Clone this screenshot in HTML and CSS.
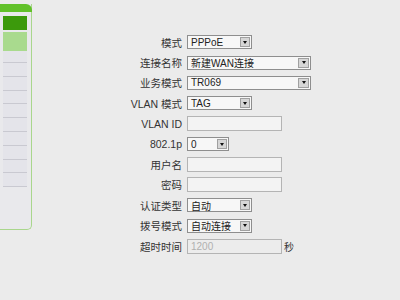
FILE: index.html
```html
<!DOCTYPE html>
<html lang="zh-CN">
<head>
  <meta charset="UTF-8">
  <title>WAN 设置</title>
  <link rel="stylesheet" href="styles.css">
</head>
<body>

<div class="page">
  <div class="sidebar">
    <div class="side-head"></div>
    <div class="side-body">
      <div class="nav-active"></div>
      <div class="nav-sub"></div>
      <ul class="nav-list">
        <li></li><li></li><li></li><li></li><li></li>
        <li></li><li></li><li></li><li></li><li></li>
      </ul>
    </div>
  </div>

  <div class="main">
    <div class="form">
      <label>模式</label>
      <div class="select w-short"><span>PPPoE</span><i class="arrow"></i></div>

      <label>连接名称</label>
      <div class="select w-long"><span>新建WAN连接</span><i class="arrow"></i></div>

      <label>业务模式</label>
      <div class="select w-long"><span>TR069</span><i class="arrow"></i></div>

      <label>VLAN 模式</label>
      <div class="select w-short"><span>TAG</span><i class="arrow"></i></div>

      <label>VLAN ID</label>
      <div><input class="text" type="text"></div>

      <label>802.1p</label>
      <div class="select w-tiny"><span>0</span><i class="arrow"></i></div>

      <label>用户名</label>
      <div><input class="text" type="text"></div>

      <label>密码</label>
      <div><input class="text" type="password"></div>

      <label>认证类型</label>
      <div class="select w-short"><span>自动</span><i class="arrow"></i></div>

      <label>拨号模式</label>
      <div class="select w-short"><span>自动连接</span><i class="arrow"></i></div>

      <label>超时时间</label>
      <div class="with-unit"><input class="text" type="text" value="1200" disabled><span>秒</span></div>
    </div>
  </div>
</div>

</body>
</html>
```

FILE: styles.css
```css
body {
    margin: 0;
    background-color: #ebebeb;
    font-family: 'Liberation Sans', 'Noto Sans CJK SC', sans-serif;
    color: #333;
}
.page {
    display: flex;
    align-items: flex-start;
    width: 400px;
    height: 300px;
}

/* left menu column */
.sidebar {
    width: 31px;
    margin-top: 4px;
    height: 225px;
    border-right: 1px solid #a9d68c;
    border-bottom: 1px solid #a9d68c;
    border-bottom-right-radius: 5px;
    background-color: #e9e9ec;
    display: flex;
    flex-direction: column;
}
.side-head {
    height: 8px;
    margin-right: -1px;
    background-color: #62c12a;
    border-top-right-radius: 6px;
}
.side-body {
    padding: 4px 4px 0 3px;
}
.nav-active {
    height: 14px;
    background-color: #3c9a0c;
}
.nav-sub {
    height: 19px;
    margin-top: 2px;
    background-color: #a9da8e;
}
.nav-list {
    list-style: none;
    margin: 0;
    padding: 0;
    background-color: #e4e4ea;
}
.nav-list li {
    height: 12.8px;
    border-bottom: 1px solid #c9c9d1;
}
.nav-list li:first-child {
    height: 11px;
}

/* form */
.main {
    flex: 1;
    padding-top: 32px;
}
.form {
    display: grid;
    grid-template-columns: 150px auto;
    grid-auto-rows: 20.4px;
    column-gap: 5px;
    align-items: center;
    justify-items: start;
}
.form label {
    justify-self: end;
    font-size: 10.5px;
    color: #333;
    white-space: nowrap;
}
.select {
    display: flex;
    align-items: center;
    justify-content: space-between;
    box-sizing: border-box;
    height: 14px;
    border: 1px solid #8e8e8e;
    background-color: #f7f7f7;
    font-size: 10px;
    color: #222;
    padding: 0 1px 0 3px;
}
.w-short { width: 65px; }
.w-long { width: 124px; }
.w-tiny { width: 42px; }
.arrow {
    box-sizing: border-box;
    width: 10px;
    height: 10px;
    border: 1px solid #a0a0a0;
    background-color: #d6d6d6;
    display: flex;
    align-items: center;
    justify-content: center;
}
.w-long .arrow {
    width: 11px;
}
.arrow::after {
    content: "";
    border-left: 2.5px solid transparent;
    border-right: 2.5px solid transparent;
    border-top: 3px solid #111;
}
.text {
    box-sizing: border-box;
    width: 95px;
    height: 15px;
    margin: 0;
    padding: 0 3px;
    border: 1px solid #b4b4b4;
    background-color: #f3f3f3;
    font-family: 'Liberation Sans', sans-serif;
    font-size: 10px;
    color: #222;
    display: block;
}
.text:disabled {
    color: #b0b0b0;
    background-color: #ececec;
}
.with-unit {
    display: flex;
    align-items: center;
    gap: 2px;
    font-size: 10px;
}
```
